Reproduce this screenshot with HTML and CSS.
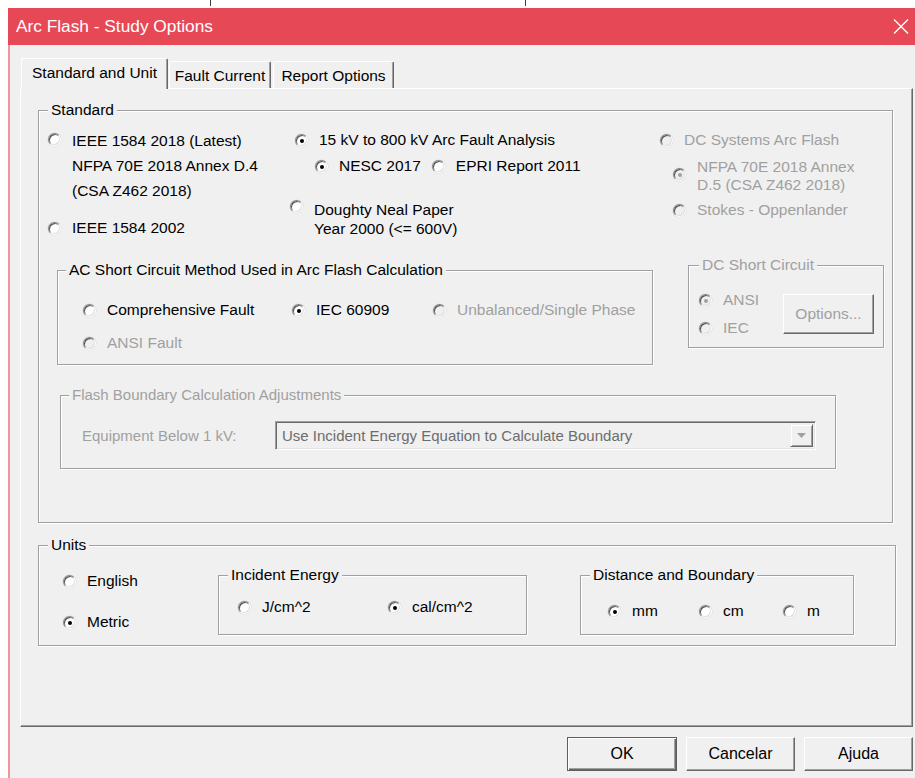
FILE: index.html
```html
<!DOCTYPE html>
<html lang="en">
<head>
<meta charset="utf-8">
<title>Arc Flash - Study Options</title>
<link rel="stylesheet" href="styles.css">
</head>
<body>
<div class="desk"><span class="tick t1"></span><span class="tick t2"></span></div>
<div class="window">
  <div class="titlebar">
    <span class="title">Arc Flash - Study Options</span>
    <svg class="close" width="16" height="15" viewBox="0 0 16 15"><path d="M1 0.5 L15 14.5 M15 0.5 L1 14.5" stroke="#fff" stroke-width="1.4" fill="none"/></svg>
  </div>
  <div class="client">
    <div class="tabs">
      <div class="tab active">Standard and Unit</div>
      <div class="tab tab-fault">Fault Current</div>
      <div class="tab tab-report">Report Options</div>
    </div>
    <div class="panel">
      <div class="group std">
        <span class="legend">Standard</span>
        <div class="std-grid">
          <div class="col">
            <div class="opt tall"><span class="radio"></span><span class="label">IEEE 1584 2018 (Latest)<br>NFPA 70E 2018 Annex D.4<br>(CSA Z462 2018)</span></div>
            <div class="opt ieee02"><span class="radio"></span><span class="label">IEEE 1584 2002</span></div>
          </div>
          <div class="col">
            <div class="opt kv"><span class="radio on"></span><span class="label">15 kV to 800 kV Arc Fault Analysis</span></div>
            <div class="subrow">
              <div class="opt"><span class="radio on"></span><span class="label">NESC 2017</span></div>
              <div class="opt"><span class="radio"></span><span class="label">EPRI Report 2011</span></div>
            </div>
            <div class="opt doughty"><span class="radio"></span><span class="label">Doughty Neal Paper<br>Year 2000 (&lt;= 600V)</span></div>
          </div>
          <div class="col">
            <div class="opt off"><span class="radio"></span><span class="label">DC Systems Arc Flash</span></div>
            <div class="opt off nfpa"><span class="radio on"></span><span class="label">NFPA 70E 2018 Annex<br>D.5 (CSA Z462 2018)</span></div>
            <div class="opt off stokes"><span class="radio"></span><span class="label">Stokes - Oppenlander</span></div>
          </div>
        </div>

        <div class="sc-row">
          <div class="group ac">
            <span class="legend">AC Short Circuit Method Used in Arc Flash Calculation</span>
            <div class="ac-grid">
              <div class="opt"><span class="radio"></span><span class="label">Comprehensive Fault</span></div>
              <div class="opt"><span class="radio on"></span><span class="label">IEC 60909</span></div>
              <div class="opt off"><span class="radio"></span><span class="label">Unbalanced/Single Phase</span></div>
              <div class="opt off"><span class="radio"></span><span class="label">ANSI Fault</span></div>
            </div>
          </div>
          <div class="group dc off">
            <span class="legend">DC Short Circuit</span>
            <div class="dc-body">
              <div class="dc-radios">
                <div class="opt off dc-ansi"><span class="radio on"></span><span class="label">ANSI</span></div>
                <div class="opt off dc-iec"><span class="radio"></span><span class="label">IEC</span></div>
              </div>
              <div class="btn btn-options">Options...</div>
            </div>
          </div>
        </div>

        <div class="group fb">
          <span class="legend">Flash Boundary Calculation Adjustments</span>
          <div class="fb-row">
            <span class="fb-label">Equipment Below 1 kV:</span>
            <div class="combo">
              <span class="combo-text">Use Incident Energy Equation to Calculate Boundary</span>
              <span class="combo-btn"><svg width="9" height="5" viewBox="0 0 9 5"><path d="M0 0 H9 L4.5 5 Z" fill="#a0a0a0"/></svg></span>
            </div>
          </div>
        </div>
      </div>

      <div class="group units">
        <span class="legend">Units</span>
        <div class="units-body">
          <div class="sys">
            <div class="opt english"><span class="radio"></span><span class="label">English</span></div>
            <div class="opt metric"><span class="radio on"></span><span class="label">Metric</span></div>
          </div>
          <div class="group ie">
            <span class="legend">Incident Energy</span>
            <div class="ie-row">
              <div class="opt"><span class="radio"></span><span class="label">J/cm^2</span></div>
              <div class="opt"><span class="radio on"></span><span class="label">cal/cm^2</span></div>
            </div>
          </div>
          <div class="group db">
            <span class="legend">Distance and Boundary</span>
            <div class="db-row">
              <div class="opt"><span class="radio on"></span><span class="label">mm</span></div>
              <div class="opt"><span class="radio"></span><span class="label">cm</span></div>
              <div class="opt"><span class="radio"></span><span class="label">m</span></div>
            </div>
          </div>
        </div>
      </div>
    </div>

    <div class="buttons">
      <div class="btn default btn-ok">OK</div>
      <div class="btn btn-cancel">Cancelar</div>
      <div class="btn btn-help">Ajuda</div>
    </div>
  </div>
</div>
</body>
</html>
```

FILE: styles.css
```css
* { box-sizing: border-box; }

html, body {
  margin: 0;
  height: 100%;
  overflow: hidden;
}

body {
  background: #ffffff;
  font-family: "Liberation Sans", Arial, sans-serif;
  font-size: 15.5px;
  color: #000;
}

/* strip of desktop above the dialog */
.desk {
  display: flex;
  height: 8px;
}
.tick {
  width: 1px;
  height: 6px;
  background: #3c3c3c;
}
.t1 { margin-left: 210px; }
.t2 { margin-left: 314px; }

.window {
  margin-left: 8px;
  width: 907px;
}

.titlebar {
  height: 37px;
  background: #e74856;
  color: #fff;
  display: flex;
  align-items: center;
  justify-content: space-between;
  padding-left: 8px;
  font-size: 17.3px;
}
.close { margin-right: 6px; }

.client {
  background: #f0f0f0;
  border-left: 2px solid #f0959c;
  height: 733px;
  overflow: hidden;
}

/* tab strip */
.tabs {
  display: flex;
  align-items: flex-end;
  height: 31px;
  margin: 13px 0 -1px 11px;
  position: relative;
  z-index: 1;
}
.tab {
  height: 27px;
  margin-bottom: 1px;
  display: flex;
  align-items: center;
  justify-content: center;
  background: #f0f0f0;
  border: 1px solid;
  border-color: #fff #696969 transparent #fff;
  border-bottom: none;
  border-radius: 2px 2px 0 0;
  box-shadow: inset -1px 0 0 #a0a0a0;
  white-space: nowrap;
  padding-top: 1px;
}
.tab.active {
  width: 147px;
  height: 31px;
  margin-bottom: 0;
  padding-bottom: 3px;
}
.tab-fault { width: 102px; margin-left: 1px; }
.tab-report { width: 121px; margin-left: 2px; }

.panel {
  margin-left: 10px;
  width: 893px;
  height: 639px;
  border: 1px solid;
  border-color: #fff #696969 #696969 #fff;
  box-shadow: inset -1px -1px 0 #a0a0a0;
  overflow: hidden;
}

/* etched group boxes */
.group {
  border: 1px solid #a0a0a0;
  box-shadow: inset 1px 1px 0 #fff, 1px 1px 0 #fff;
}
.legend {
  display: table;
  margin: -10px 0 0 9px;
  padding: 0 3px;
  background: #f0f0f0;
  line-height: 18px;
  white-space: nowrap;
}

/* radio options: sunken round buttons */
.opt {
  display: flex;
  align-items: flex-start;
  line-height: 20px;
  white-space: nowrap;
}
.radio {
  flex: none;
  width: 13px;
  height: 13px;
  margin: 4px 11px 0 0;
  border-radius: 50%;
  border: 1px solid;
  border-color: #8a8a8a #fff #fff #8a8a8a;
  background: #fff;
  box-shadow: inset 1px 1px 0 #505050, inset -1px -1px 0 #dcdcdc, 0 0 0 0.5px #d8d8d8;
  display: flex;
  align-items: center;
  justify-content: center;
}
.radio.on::after {
  content: "";
  width: 4px;
  height: 4px;
  border-radius: 50%;
  background: #000;
}
.off { color: #a0a0a0; }
.off .radio { background: #f0f0f0; }
.off .radio.on::after { background: #a0a0a0; }

/* Standard group */
.std {
  margin: 21px 0 0 17px;
  width: 855px;
  height: 413px;
}
.std-grid {
  display: grid;
  grid-template-columns: 242px 370px 1fr;
  margin: 11px 0 0 9px;
}
.opt.tall {
  margin-top: -2px;
  line-height: 25px;
}
.opt.tall .radio { margin-top: 5px; }
.ieee02 { margin-top: 15px; }
.kv { margin-left: 5px; }
.subrow {
  display: flex;
  gap: 11px;
  margin: 6px 0 0 25px;
}
.doughty {
  margin-top: 24px;
  line-height: 19px;
}
.doughty .radio { margin-top: 0; }
.nfpa {
  margin: 8px 0 0 13px;
  line-height: 18px;
}
.nfpa .radio { margin-top: 10px; }
.stokes { margin: 6px 0 0 13px; }

/* short circuit groups */
.sc-row {
  display: flex;
  align-items: flex-start;
  margin: 27px 0 0 18px;
}
.ac {
  margin-top: 5px;
  width: 596px;
  height: 95px;
}
.ac .legend { margin-left: 8px; }
.ac-grid {
  display: grid;
  grid-template-columns: 209px 141px 1fr;
  row-gap: 13px;
  margin: 21px 0 0 25px;
}
.dc {
  margin-left: 35px;
  width: 196px;
  height: 83px;
}
.dc .legend { margin-left: 10px; }
.dc-body {
  display: flex;
  align-items: flex-start;
  margin-left: 10px;
}
.dc-radios { width: 84px; }
.dc-ansi { margin-top: 16px; }
.dc-iec { margin-top: 8px; }

/* push buttons */
.btn {
  display: flex;
  align-items: center;
  justify-content: center;
  height: 34px;
  background: #f0f0f0;
  border: 1px solid;
  border-color: #fff #696969 #696969 #fff;
  box-shadow: inset -1px -1px 0 #a0a0a0;
  font-size: 16px;
  white-space: nowrap;
}
.btn.default {
  border: 1px solid #5e5e5e;
  box-shadow: inset 1px 1px 0 #fff, inset -1px -1px 0 #696969, inset -2px -2px 0 #a0a0a0;
}
.btn-options {
  margin-top: 20px;
  width: 91px;
  height: 40px;
  color: #a0a0a0;
  font-size: 15.5px;
}

/* flash boundary group */
.fb {
  margin: 30px 0 0 21px;
  width: 776px;
  height: 74px;
  color: #a0a0a0;
  font-size: 15px;
}
.fb .legend { margin-left: 8px; }
.fb-row {
  display: flex;
  align-items: center;
  margin: 17px 0 0 21px;
}
.fb-label { width: 193px; }
.combo {
  width: 541px;
  height: 29px;
  display: flex;
  align-items: center;
  justify-content: space-between;
  border: 1px solid;
  border-color: #a0a0a0 #fff #fff #a0a0a0;
  box-shadow: inset 1px 1px 0 #696969, inset -1px -1px 0 #e3e3e3;
  background: #f0f0f0;
  padding: 2px 2px 2px 6px;
}
.combo-text { color: #6d6d6d; }
.combo-btn {
  width: 23px;
  height: 23px;
  display: flex;
  align-items: center;
  justify-content: center;
  border: 1px solid;
  border-color: #f0f0f0 #696969 #696969 #f0f0f0;
  box-shadow: inset 1px 1px 0 #fff, inset -1px -1px 0 #a0a0a0;
}

/* units group */
.units {
  margin: 22px 0 0 17px;
  width: 858px;
  height: 101px;
}
.units-body {
  display: flex;
  align-items: flex-start;
}
.sys {
  width: 179px;
  padding-left: 24px;
}
.english { margin-top: 17px; }
.metric { margin-top: 21px; }
.ie {
  margin-top: 21px;
  width: 309px;
  height: 60px;
}
.ie-row {
  display: grid;
  grid-template-columns: 150px 1fr;
  margin: 13px 0 0 19px;
}
.db {
  margin: 21px 0 0 53px;
  width: 274px;
  height: 60px;
}
.db-row {
  display: grid;
  grid-template-columns: 91px 84px 1fr;
  margin: 17px 0 0 27px;
}

/* dialog buttons */
.buttons {
  display: flex;
  gap: 9px;
  margin: 10px 0 0 557px;
}
.btn-ok { width: 110px; }
.btn-cancel { width: 109px; }
.btn-help { width: 109px; }
```
